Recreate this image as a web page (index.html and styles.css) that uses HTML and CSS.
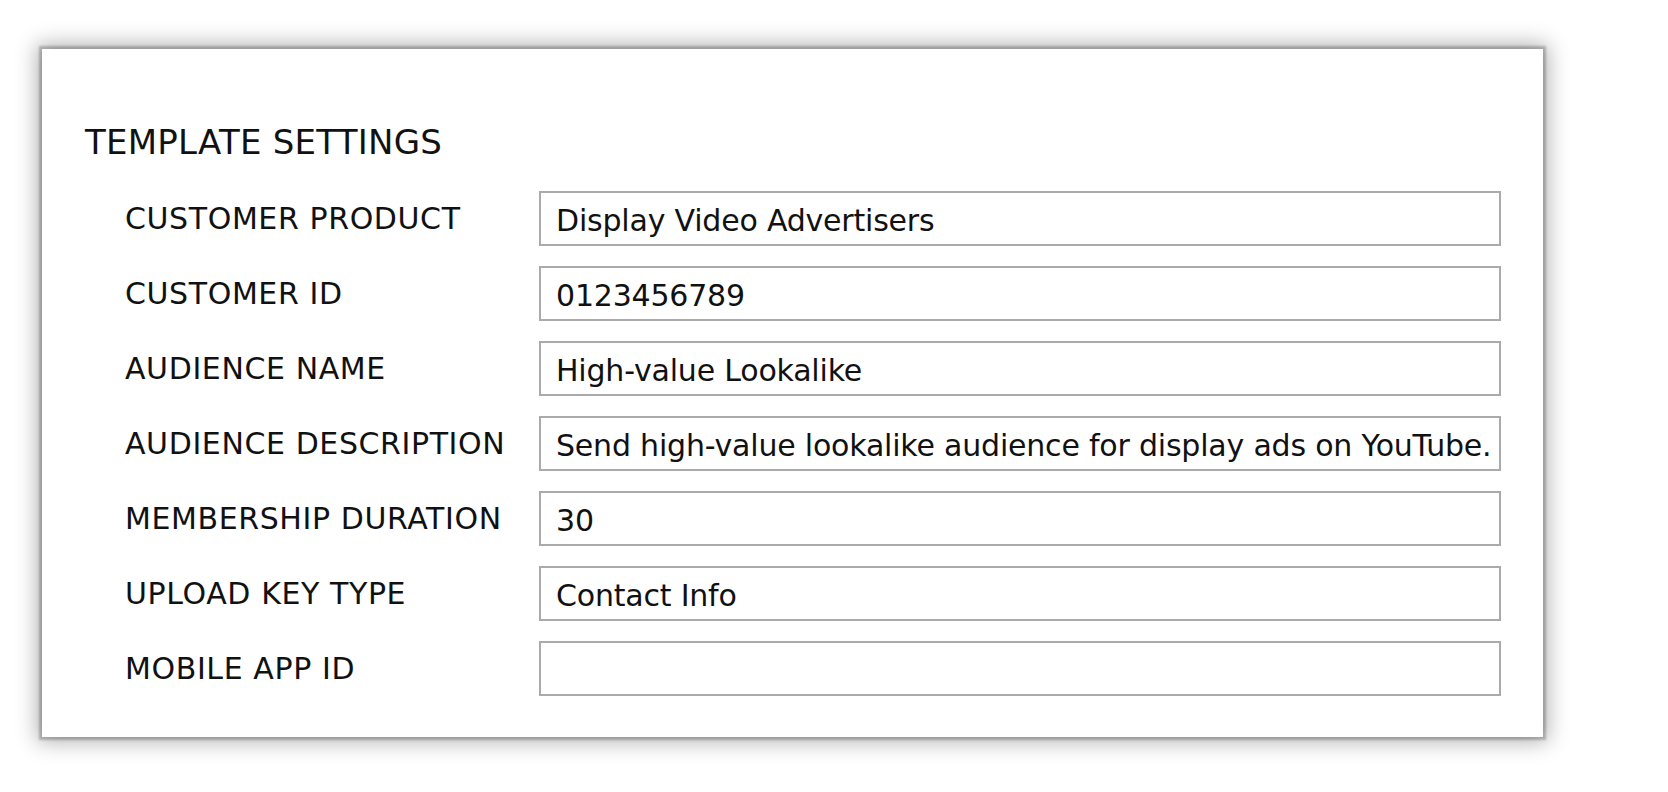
FILE: index.html
```html
<!DOCTYPE html>
<html lang="en">
<head>
  <meta charset="UTF-8">
  <title>Template Settings</title>
  <link rel="stylesheet" href="styles.css">
</head>
<body>

  <div class="card">
    <h2>TEMPLATE SETTINGS</h2>

    <div class="fields">
      <label for="product">CUSTOMER PRODUCT</label>
      <input id="product" type="text" value="Display Video Advertisers">

      <label for="customer">CUSTOMER ID</label>
      <input id="customer" type="text" value="0123456789">

      <label for="audience">AUDIENCE NAME</label>
      <input id="audience" type="text" value="High-value Lookalike">

      <label for="description">AUDIENCE DESCRIPTION</label>
      <input id="description" type="text" value="Send high-value lookalike audience for display ads on YouTube.">

      <label for="duration">MEMBERSHIP DURATION</label>
      <input id="duration" type="text" value="30">

      <label for="keytype">UPLOAD KEY TYPE</label>
      <input id="keytype" type="text" value="Contact Info">

      <label for="appid">MOBILE APP ID</label>
      <input id="appid" type="text" value="">
    </div>
  </div>

</body>
</html>
```

FILE: styles.css
```css
body {
  font-family: "DejaVu Sans", sans-serif;
  color: #111;
  background-color: #ffffff;
  margin: 0;
  padding: 49px 0 55px 42px;
}

.card {
  box-sizing: border-box;
  width: 1501px;
  padding: 73px 42px 41px 43px;
  background-color: #ffffff;
  box-shadow: 0 0 2px 3px rgba(0, 0, 0, 0.22), 0 0 20px 5px rgba(0, 0, 0, 0.3);
}

.card h2 {
  margin: 0 0 29px 0;
  font-size: 34px;
  font-weight: normal;
  line-height: 40px;
  letter-spacing: 0.25px;
}

.fields {
  display: grid;
  grid-template-columns: 414px 1fr;
  row-gap: 20px;
  padding-left: 40px;
}

.fields label {
  font-size: 30px;
  line-height: 35px;
  padding-top: 10px;
  letter-spacing: 0.6px;
}

.fields input {
  box-sizing: border-box;
  height: 55px;
  width: 100%;
  margin: 0;
  padding: 10px 6px 6px 15px;
  border: 2px solid #aaaaaa;
  font-family: inherit;
  font-size: 30px;
  line-height: 35px;
  letter-spacing: -0.2px;
  color: #111;
  background-color: #ffffff;
  outline: none;
}
```
